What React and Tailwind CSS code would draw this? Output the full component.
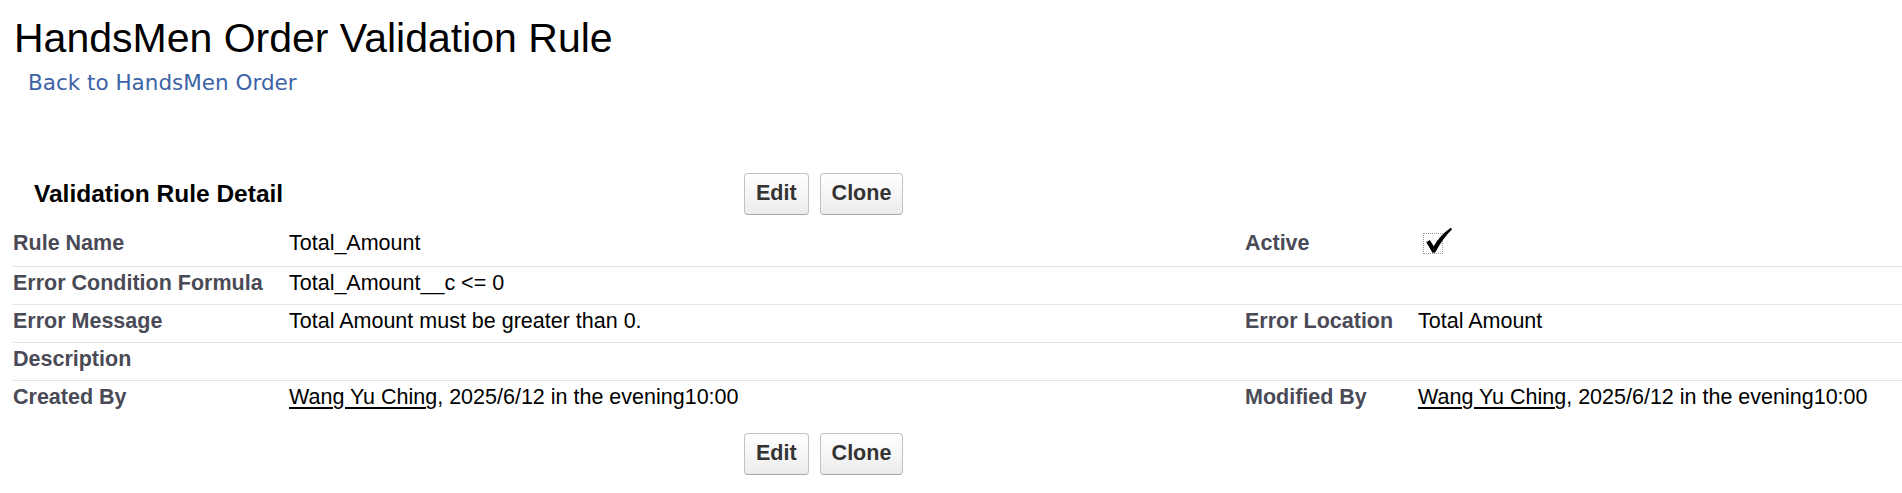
import React from 'react';

const rows = [
    { label: 'Rule Name', value: 'Total_Amount', label2: 'Active', value2: 'check' },
    { label: 'Error Condition Formula', value: 'Total_Amount__c <= 0', label2: '', value2: '' },
    { label: 'Error Message', value: 'Total Amount must be greater than 0.', label2: 'Error Location', value2: 'Total Amount' },
    { label: 'Description', value: '', label2: '', value2: '' },
    { label: 'Created By', value: 'user', label2: 'Modified By', value2: 'user' },
];

const Button = ({ children }) => (
    <button className="h-[42px] px-[11px] border border-[#c2c2c2] border-b-[#a8a8a8] rounded-[4px] bg-gradient-to-b from-white to-[#ececec] text-[21.5px] font-bold text-[#333] leading-none">
        {children}
    </button>
);

const ButtonBar = () => (
    <div className="flex gap-[11px]">
        <Button>Edit</Button>
        <Button>Clone</Button>
    </div>
);

const CheckImage = () => (
    <div className="relative ml-[5px] w-[20px] h-[21px] border border-dotted border-[#9a9a9a]">
        <svg className="absolute left-[1px] top-[-7px] w-[28px] h-[27px]" viewBox="0 0 32 30">
            <path d="M1.5 17 L5.5 14.5 L10 21.5 Q17 9 29.5 0.5 L31 2 Q20.5 12 11.5 29 L8.5 29 Z" fill="#000" />
        </svg>
    </div>
);

const UserStamp = () => (
    <span>
        <span className="underline decoration-[1.5px] underline-offset-[3px]">Wang Yu Ching</span>, 2025/6/12 in the evening10:00
    </span>
);

const renderValue = (v) => {
    if (v === 'check') return <CheckImage />;
    if (v === 'user') return <UserStamp />;
    return v;
};

export default function App() {
    return (
        <div className="w-full h-[493px] overflow-hidden bg-white font-['Liberation_Sans',Arial,sans-serif] text-black">
            {/* Page header */}
            <h1 className="pt-[18px] pl-[14px] text-[41px] leading-[41px] font-normal">HandsMen Order Validation Rule</h1>
            <div className="mt-[12px] pl-[28px] h-[24px]">
                <a className="text-[21.5px] leading-[24px] text-[#3d63a6] font-['DejaVu_Sans',Verdana,sans-serif]">Back to HandsMen Order</a>
            </div>

            {/* Detail block title + buttons */}
            <div className="mt-[78px] flex items-center h-[42px]">
                <div className="w-[744px] pl-[34px] text-[24.5px] font-bold">Validation Rule Detail</div>
                <ButtonBar />
            </div>

            {/* Detail rows */}
            <div className="mt-[10px] ml-[13px]">
                {rows.map((r, i) => (
                    <div
                        key={r.label}
                        className={`grid grid-cols-[276px_956px_173px_1fr] items-center pb-[5px] text-[21.5px] ${i === 0 ? 'h-[41px]' : 'h-[38px] border-t border-[#e3e3e3]'}`}
                    >
                        <div className="font-bold text-[#4a4a56]">{r.label}</div>
                        <div>{renderValue(r.value)}</div>
                        <div className="font-bold text-[#4a4a56]">{r.label2}</div>
                        <div>{renderValue(r.value2)}</div>
                    </div>
                ))}
            </div>

            <div className="mt-[15px] pl-[744px]">
                <ButtonBar />
            </div>
        </div>
    );
}
